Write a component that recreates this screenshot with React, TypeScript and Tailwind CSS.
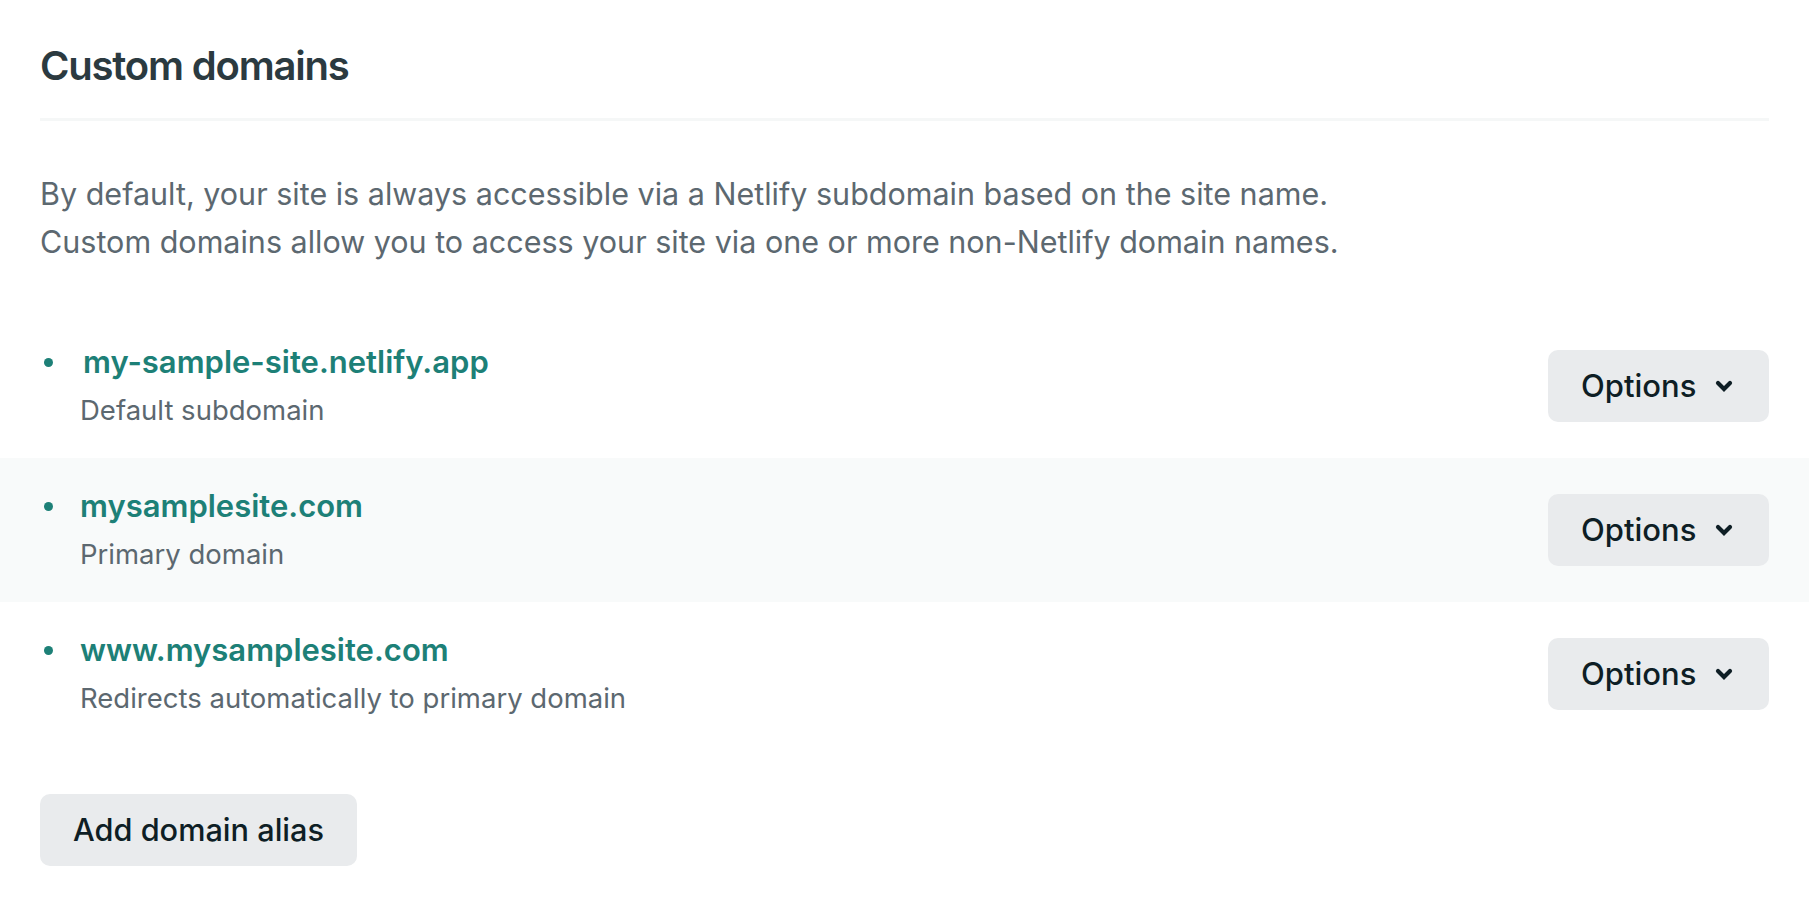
import React from "react";

const font = { fontFamily: "Inter, 'Noto Sans', sans-serif" };

function Chevron() {
  return (
    <svg width="18" height="12" viewBox="0 0 18 12" fill="none" aria-hidden="true">
      <path d="M3 3 L9 9 L15 3" stroke="#0e1e25" strokeWidth="4.2" strokeLinecap="round" strokeLinejoin="miter" />
    </svg>
  );
}

function OptionsButton() {
  return (
    <button className="flex h-[72px] w-[221px] items-center rounded-[10px] bg-[#e9ebed] pl-[33px] text-[31px] font-medium text-[#0e1e25]">
      <span>Options</span>
      <span className="ml-[19px] flex items-center">
        <Chevron />
      </span>
    </button>
  );
}

function Row({ name, sub, shaded, nameShift }: { name: string; sub: string; shaded?: boolean; nameShift?: boolean }) {
  return (
    <div className={`flex h-[144px] items-center justify-between px-[40px] ${shaded ? "bg-[#f8fafa]" : "bg-white"}`}>
      <div className="flex items-start">
        <div className="flex h-[48px] w-[40px] items-center">
          <span className="ml-[4px] block h-[9px] w-[9px] rounded-full bg-[#1d8077]" />
        </div>
        <div className="flex flex-col">
          <span className={`h-[48px] text-[31px] font-semibold leading-[48px] text-[#1d8077] ${nameShift ? "pl-[3px]" : ""}`}>{name}</span>
          <span className="h-[48px] text-[27.5px] leading-[48px] text-[#5c6870]">{sub}</span>
        </div>
      </div>
      <OptionsButton />
    </div>
  );
}

export default function App() {
  return (
    <div className="min-h-[907px] w-full bg-white" style={font}>
      <div className="px-[40px] pt-[42px]">
        <h2 className="h-[48px] text-[40px] font-semibold leading-[48px] tracking-[-1.2px] text-[#2b3a40]">Custom domains</h2>
        <div className="mt-[28px] h-[3px] w-full bg-[#f5f7f7]" />
        <div className="mt-[49px] text-[30.5px] leading-[48px] text-[#5c6870]">
          <p>By default, your site is always accessible via a Netlify subdomain based on the site name.</p>
          <p>Custom domains allow you to access your site via one or more non-Netlify domain names.</p>
        </div>
      </div>
      <div className="mt-[48px]">
        <Row name="my-sample-site.netlify.app" sub="Default subdomain" nameShift />
        <Row name="mysamplesite.com" sub="Primary domain" shaded />
        <Row name="www.mysamplesite.com" sub="Redirects automatically to primary domain" />
      </div>
      <div className="mt-[48px] px-[40px]">
        <button className="flex h-[72px] items-center rounded-[10px] bg-[#e9ebed] px-[33px] text-[30.7px] font-medium text-[#0e1e25]">
          Add domain alias
        </button>
      </div>
    </div>
  );
}
